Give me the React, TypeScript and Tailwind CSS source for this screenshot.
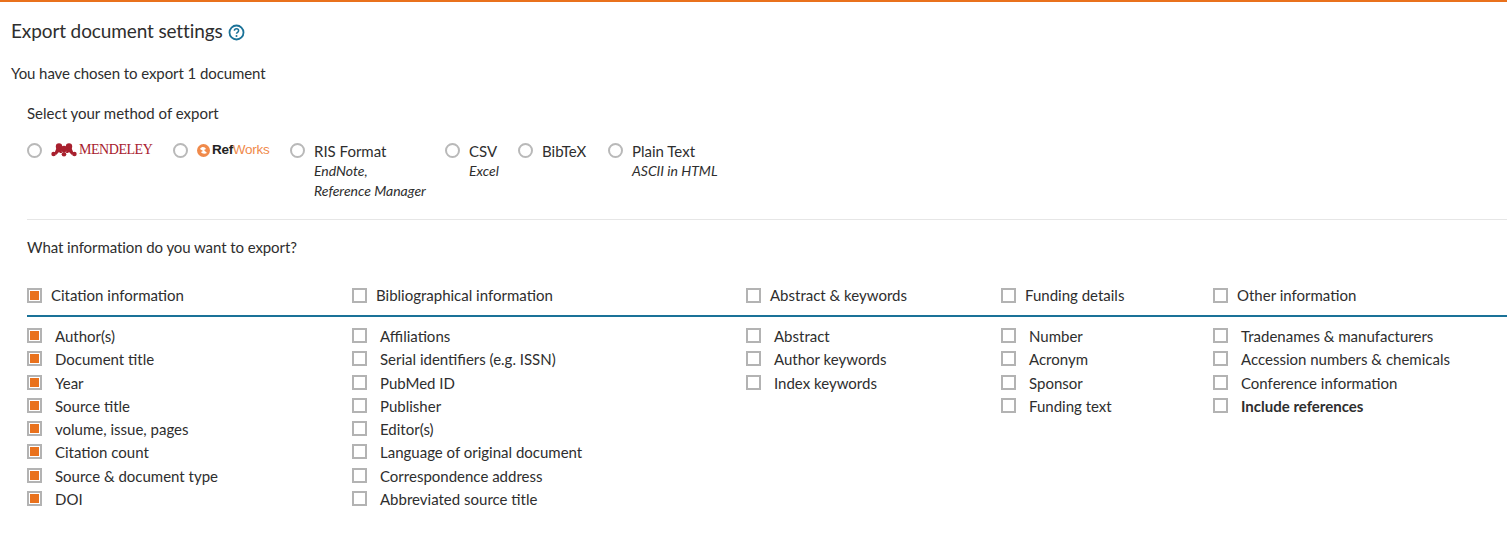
import React from 'react';

const columns = [
  {
    title: 'Citation information',
    width: 'w-[325px]',
    checked: true,
    items: ['Author(s)', 'Document title', 'Year', 'Source title', 'volume, issue, pages', 'Citation count', 'Source & document type', 'DOI'],
  },
  {
    title: 'Bibliographical information',
    width: 'w-[394px]',
    checked: false,
    items: ['Affiliations', 'Serial identifiers (e.g. ISSN)', 'PubMed ID', 'Publisher', 'Editor(s)', 'Language of original document', 'Correspondence address', 'Abbreviated source title'],
  },
  {
    title: 'Abstract & keywords',
    width: 'w-[255px]',
    checked: false,
    items: ['Abstract', 'Author keywords', 'Index keywords'],
  },
  {
    title: 'Funding details',
    width: 'w-[212px]',
    checked: false,
    items: ['Number', 'Acronym', 'Sponsor', 'Funding text'],
  },
  {
    title: 'Other information',
    width: 'flex-1',
    checked: false,
    items: ['Tradenames & manufacturers', 'Accession numbers & chemicals', 'Conference information', 'Include references'],
  },
];

function Checkbox({ checked, className = '' }: { checked: boolean; className?: string }) {
  return (
    <span className={`flex h-[15px] w-[15px] shrink-0 items-center justify-center border-2 border-[#b3b3b3] bg-white ${className}`}>
      {checked && <span className="h-[9px] w-[9px] bg-[#e9711c]" />}
    </span>
  );
}

function Radio() {
  return <span className="h-[15px] w-[15px] shrink-0 rounded-full border-2 border-[#b9b9b9] bg-white" />;
}

function MendeleyLogo() {
  return (
    <span className="flex items-center gap-[2px] text-[#a8202e]">
      <svg width="26" height="14" viewBox="0 0 26 14" fill="currentColor">
        <circle cx="8" cy="3.5" r="3.2" />
        <circle cx="18" cy="3.5" r="3.2" />
        <circle cx="13" cy="6" r="3.2" />
        <circle cx="2.6" cy="11" r="2.3" />
        <circle cx="13" cy="11.3" r="2.3" />
        <circle cx="23.4" cy="11" r="2.3" />
        <path d="M5.5 5l5 1 .5 4H9L8 9l-3 3-1.5-2zM15.5 6l5-1 2 5-1.5 2-3-3-1 1h-2z" />
      </svg>
      <span className="font-['Liberation_Serif',serif] text-[14px] leading-none tracking-[-0.45px]">MENDELEY</span>
    </span>
  );
}

function RefWorksLogo() {
  return (
    <span className="flex items-center gap-[2px]">
      <svg width="13" height="13" viewBox="0 0 13 13">
        <circle cx="6.5" cy="6.5" r="6.5" fill="#f08a4b" />
        <path d="M3 5c2-3 5-2 6 0L7 6l3 3c-2 1-5 1-6-1l2-1z" fill="#fff" />
      </svg>
      <span className="font-['Liberation_Sans',sans-serif] text-[13.5px] leading-none tracking-[-0.3px]">
        <span className="font-bold text-[#222]">Ref</span>
        <span className="text-[#f08a4b]">Works</span>
      </span>
    </span>
  );
}

export default function App() {
  return (
    <div className="h-[546px] overflow-hidden border-t-2 border-[#e9711c] bg-white pl-[11px] font-['Lato',sans-serif] text-[15px] leading-[20px] text-[#2e2e2e]">
      <div className="mt-[15px] flex items-center gap-[5px] h-[28px]">
        <h1 className="text-[19px] leading-[28px] font-normal tracking-[-0.12px]">Export document settings</h1>
        <svg width="17" height="17" viewBox="0 0 17 17" fill="none" className="mt-[2px]">
          <circle cx="8.5" cy="8.5" r="7" stroke="#1a7298" strokeWidth="1.8" />
          <path d="M6.4 6.8c0-1.3 1-2 2.1-2s2.1.7 2.1 1.9c0 1.6-2.1 1.6-2.1 3.1" stroke="#1a7298" strokeWidth="1.5" />
          <circle cx="8.5" cy="12" r="1" fill="#1a7298" />
        </svg>
      </div>
      <p className="mt-[18px] tracking-[-0.08px]">You have chosen to export 1 document</p>

      <div className="ml-[16px]">
        <p className="mt-[20px]">Select your method of export</p>

        <div className="mt-[17px] flex h-[60px] items-start">
          <div className="flex h-[20px] w-[146px] items-center gap-[9px]">
            <Radio />
            <MendeleyLogo />
          </div>
          <div className="flex h-[20px] w-[117px] items-center gap-[9px]">
            <Radio />
            <RefWorksLogo />
          </div>
          <ExportOption label="RIS Format" width="w-[155px]" notes={['EndNote,', 'Reference Manager']} />
          <ExportOption label="CSV" width="w-[73px]" notes={['Excel']} />
          <ExportOption label="BibTeX" width="w-[90px]" />
          <ExportOption label="Plain Text" width="w-[120px]" notes={['ASCII in HTML']} />
        </div>

        <div className="mt-[19px] border-t border-[#e6e6e6] pt-[17px]">
          <p className="tracking-[-0.08px]">What information do you want to export?</p>
        </div>

        <div className="mt-[28px] flex border-b-2 border-[#1a7298] pb-[10px]">
          {columns.map((col) => (
            <div key={col.title} className={`flex h-[20px] items-center gap-[9px] ${col.width}`}>
              <Checkbox checked={col.checked} />
              <span>{col.title}</span>
            </div>
          ))}
        </div>

        <div className="mt-[7.5px] flex">
          {columns.map((col) => (
            <ul key={col.title} className={`flex flex-col ${col.width}`}>
              {col.items.map((item) => (
                <li key={item} className="flex h-[23.25px] items-center gap-[13px]">
                  <Checkbox checked={col.checked} className="-mt-[1px]" />
                  <span className={item === 'Include references' ? 'font-bold' : ''}>{item}</span>
                </li>
              ))}
            </ul>
          ))}
        </div>
      </div>
    </div>
  );
}

function ExportOption({ label, width, notes }: { label: string; width: string; notes?: string[] }) {
  return (
    <div className={`flex items-start gap-[9px] ${width}`}>
      <span className="mt-[3px] flex">
        <Radio />
      </span>
      <div className="pt-[1px]">
        <div className="h-[20px]">{label}</div>
        {notes?.map((note) => (
          <div key={note} className="text-[14px] italic leading-[20px]">{note}</div>
        ))}
      </div>
    </div>
  );
}
